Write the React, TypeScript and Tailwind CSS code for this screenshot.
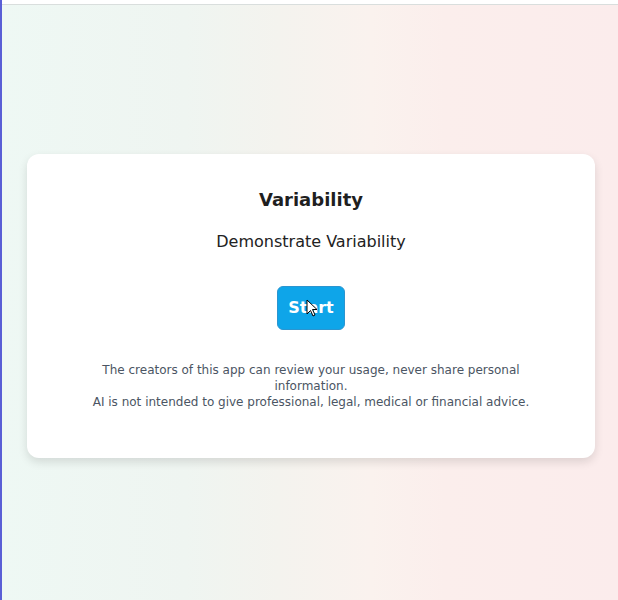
import React from "react";

export default function App() {
  return (
    <div
      className="relative w-[618px] h-[600px] overflow-hidden bg-[linear-gradient(90deg,#eef8f4_0%,#eff5f1_30%,#f4f3ee_45%,#faf2ee_60%,#fbeeec_72%,#fbecec_100%)]"
      style={{ fontFamily: '"DejaVu Sans", sans-serif' }}
    >
      <div className="h-[4px] bg-white" />
      <div className="h-px bg-[#d9dedd]" />
      <div className="absolute left-0 top-0 h-full w-[2px] bg-[#5a5fd6]" />
      <div className="flex justify-center pt-[149px] pl-[4px]">
        <div className="w-[568px] h-[304px] bg-white rounded-[12px] shadow-[0_4px_10px_rgba(0,0,0,0.12)] flex flex-col items-center pt-[32px]">
          <h1 className="text-[18px] leading-[28px] font-bold text-[#1f1f1f]">Variability</h1>
          <p className="mt-[16px] text-[16px] leading-[24px] text-[#222]">Demonstrate Variability</p>
          <div className="relative mt-[32px]">
            <button className="w-[68px] h-[44px] rounded-[6px] bg-[#0ea5e9] border border-[#2b95d0] text-white font-bold text-[16px]">
              Start
            </button>
            <svg className="absolute left-[29px] top-[13px]" width="12" height="19" viewBox="0 0 12 19">
              <path d="M1 1 L1 15 L4.5 11.5 L7 17 L9 16 L6.5 10.5 L11 10.5 Z" fill="white" stroke="black" strokeWidth="1" strokeLinejoin="round" />
            </svg>
          </div>
          <div className="mt-[32px] max-w-[446px] text-center text-[12px] leading-[16px] text-[#4b5563]">
            <p>The creators of this app can review your usage, never share personal information.</p>
            <p>AI is not intended to give professional, legal, medical or financial advice.</p>
          </div>
        </div>
      </div>
    </div>
  );
}
